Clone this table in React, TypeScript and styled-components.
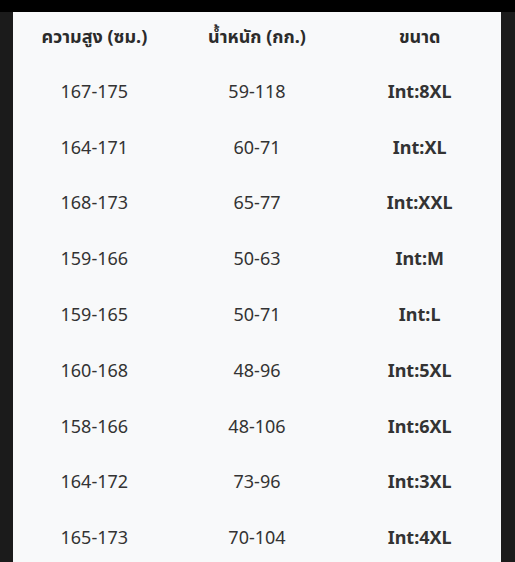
import styled, { createGlobalStyle } from "styled-components";

const GlobalStyle = createGlobalStyle`
  html, body {
    margin: 0;
    padding: 0;
    background: #1b1b1b;
  }
  body {
    font-family: "Noto Sans", "Noto Sans Thai", "DejaVu Sans", sans-serif;
  }
`;

type Row = {
  height: string;
  weight: string;
  size: string;
};

const rows: Row[] = [
  { height: "167-175", weight: "59-118", size: "Int:8XL" },
  { height: "164-171", weight: "60-71", size: "Int:XL" },
  { height: "168-173", weight: "65-77", size: "Int:XXL" },
  { height: "159-166", weight: "50-63", size: "Int:M" },
  { height: "159-165", weight: "50-71", size: "Int:L" },
  { height: "160-168", weight: "48-96", size: "Int:5XL" },
  { height: "158-166", weight: "48-106", size: "Int:6XL" },
  { height: "164-172", weight: "73-96", size: "Int:3XL" },
  { height: "165-173", weight: "70-104", size: "Int:4XL" },
];

const App: React.FC = () => {
  return (
    <>
      <GlobalStyle />
      <Screen>
        <TopBar />
        <Body>
          <Panel>
            <HeadRow>
              <HeadCell>ความสูง (ซม.)</HeadCell>
              <HeadCell>น้ำหนัก (กก.)</HeadCell>
              <HeadCell>ขนาด</HeadCell>
            </HeadRow>
            {rows.map((r) => (
              <DataRow key={r.height + r.size}>
                <Cell>{r.height}</Cell>
                <Cell>{r.weight}</Cell>
                <Cell $bold>{r.size}</Cell>
              </DataRow>
            ))}
          </Panel>
        </Body>
      </Screen>
    </>
  );
};

const Screen = styled.div`
  width: 515px;
  height: 562px;
  overflow: hidden;
  display: flex;
  flex-direction: column;
  background: #1b1b1b;
`;

const TopBar = styled.div`
  height: 12px;
  flex-shrink: 0;
  background: #000;
`;

const Body = styled.div`
  flex: 1;
  padding: 0 14px 0 13px;
  display: flex;
`;

const Panel = styled.div`
  flex: 1;
  background: #f8f9fa;
  display: flex;
  flex-direction: column;
`;

const HeadRow = styled.div`
  display: grid;
  grid-template-columns: repeat(3, 1fr);
  height: 51px;
  flex-shrink: 0;
  align-items: center;
`;

const DataRow = styled.div`
  display: grid;
  grid-template-columns: repeat(3, 1fr);
  height: 55.8px;
  flex-shrink: 0;
  align-items: center;
`;

const HeadCell = styled.div`
  text-align: center;
  font-size: 18px;
  font-weight: 700;
  color: #2b2b2b;
`;

const Cell = styled.div<{ $bold?: boolean }>`
  text-align: center;
  font-size: 18px;
  font-weight: ${(p) => (p.$bold ? 700 : 400)};
  color: #333;
`;

export default App;
